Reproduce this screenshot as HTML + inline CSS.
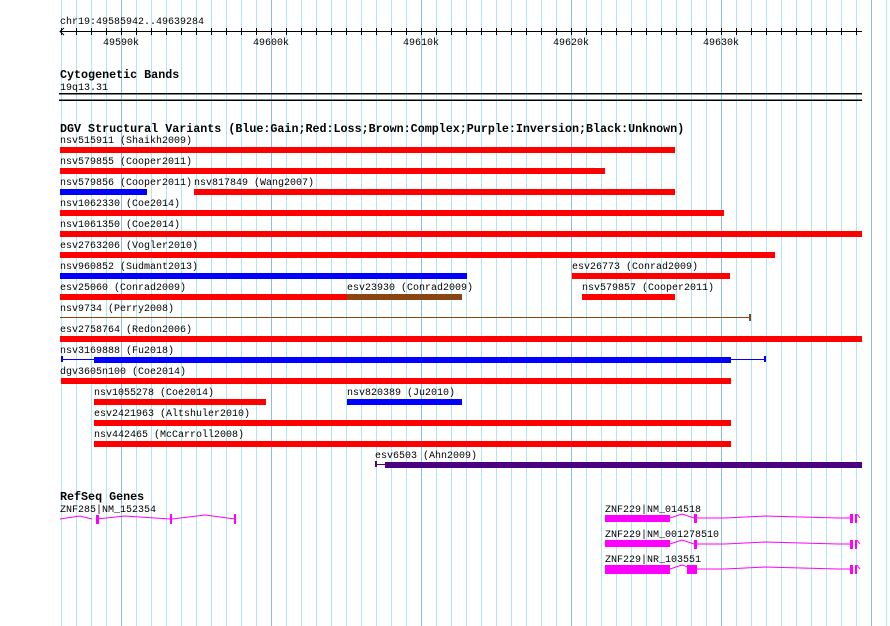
<!DOCTYPE html><html><head><style>body{margin:0;background:#fff}svg{display:block}text{font-family:"Liberation Mono",monospace;font-size:10px;fill:#000}.b{font-weight:bold;font-size:11.7px}</style></head><body>
<svg width="890" height="626" xmlns="http://www.w3.org/2000/svg">
<defs>
<pattern id="gp" x="61" y="0" width="15" height="626" patternUnits="userSpaceOnUse"><rect x="0" y="0" width="1" height="626" fill="#aee8ee"/></pattern>
<pattern id="tp" x="61" y="0" width="15" height="626" patternUnits="userSpaceOnUse"><rect x="0" y="0" width="1" height="626" fill="#000"/></pattern>
</defs>
<rect x="61" y="0" width="827" height="626" fill="url(#gp)"/>
<g fill="#8cc0e0"><rect x="121" y="0" width="1" height="626"/><rect x="271" y="0" width="1" height="626"/><rect x="421" y="0" width="1" height="626"/><rect x="571" y="0" width="1" height="626"/><rect x="721" y="0" width="1" height="626"/><rect x="871" y="0" width="1" height="626"/></g>
<rect x="61" y="28" width="800" height="7" fill="url(#tp)"/>
<text x="60" y="24">chr19:49585942..49639284</text>
<line x1="60" y1="31.5" x2="862" y2="31.5" stroke="#000"/>
<path d="M64 28 L60 31.5 L64 35" fill="none" stroke="#000"/>
<text x="103" y="45">49590k</text><text x="253" y="45">49600k</text><text x="403" y="45">49610k</text><text x="553" y="45">49620k</text><text x="703" y="45">49630k</text>
<text class="b" x="60" y="78">Cytogenetic Bands</text>
<text x="60" y="90">19q13.31</text>
<rect x="59" y="93" width="803" height="1.5" fill="#000"/><rect x="59" y="99.5" width="803" height="1.5" fill="#000"/>
<text class="b" x="60" y="132">DGV Structural Variants (Blue:Gain;Red:Loss;Brown:Complex;Purple:Inversion;Black:Unknown)</text>
<g fill="red">
<text x="60" y="143">nsv515911 (Shaikh2009)</text><rect x="60" y="147" width="615" height="6"/>
<text x="60" y="164">nsv579855 (Cooper2011)</text><rect x="60" y="168" width="545" height="6"/>
<text x="60" y="185">nsv579856 (Cooper2011)</text><text x="194" y="185">nsv817849 (Wang2007)</text><rect x="60" y="189" width="87" height="6" fill="#00f"/><rect x="194" y="189" width="481" height="6"/>
<text x="60" y="206">nsv1062330 (Coe2014)</text><rect x="60" y="210" width="664" height="6"/>
<text x="60" y="227">nsv1061350 (Coe2014)</text><rect x="60" y="231" width="802" height="6"/>
<text x="60" y="248">esv2763206 (Vogler2010)</text><rect x="60" y="252" width="715" height="6"/>
<text x="60" y="269">nsv960852 (Sudmant2013)</text><text x="572" y="269">esv26773 (Conrad2009)</text><rect x="60" y="273" width="407" height="6" fill="#00f"/><rect x="572" y="273" width="158" height="6"/>
<text x="60" y="290">esv25060 (Conrad2009)</text><text x="347" y="290">esv23930 (Conrad2009)</text><text x="582" y="290">nsv579857 (Cooper2011)</text><rect x="60" y="294" width="287" height="6"/><rect x="347" y="294" width="115" height="6" fill="#8b4513"/><rect x="582" y="294" width="93" height="6"/>
<text x="60" y="311">nsv9734 (Perry2008)</text><rect x="60" y="317" width="690" height="1" fill="#8b4513"/><rect x="749" y="314" width="2" height="7" fill="#8b4513"/>
<text x="60" y="332">esv2758764 (Redon2006)</text><rect x="60" y="336" width="802" height="6"/>
<text x="60" y="353">nsv3169888 (Fu2018)</text><rect x="61" y="359" width="704" height="1" fill="#00f"/><rect x="94" y="357" width="637" height="6" fill="#00f"/><rect x="61" y="356" width="2" height="6" fill="#00f"/><rect x="764" y="356" width="2" height="6" fill="#00f"/>
<text x="60" y="374">dgv3605n100 (Coe2014)</text><rect x="61" y="378" width="670" height="6"/>
<text x="94" y="395">nsv1055278 (Coe2014)</text><text x="347" y="395">nsv820389 (Ju2010)</text><rect x="94" y="399" width="172" height="6"/><rect x="347" y="399" width="115" height="6" fill="#00f"/>
<text x="94" y="416">esv2421963 (Altshuler2010)</text><rect x="94" y="420" width="637" height="6"/>
<text x="94" y="437">nsv442465 (McCarroll2008)</text><rect x="94" y="441" width="637" height="6"/>
<text x="375" y="458">esv6503 (Ahn2009)</text><rect x="375" y="464" width="10" height="1" fill="#4b0082"/><rect x="375" y="461" width="2" height="6" fill="#4b0082"/><rect x="385" y="462" width="477" height="6" fill="#4b0082"/>
</g>
<text class="b" x="60" y="500">RefSeq Genes</text>
<text x="60" y="512">ZNF285|NM_152354</text>
<g stroke="#f0f" fill="none" stroke-width="1">
<path d="M60 519 L80 516 L92 519 M97 519 L125 516 L170 519 M172 519 L205 515 L235 519"/>
<path d="M605 518 L670 518 L682 514 L694 518 L725 518 L765 516 L838 518 L852 518"/>
<path d="M605 544 L670 544 L682 540 L694 544 L725 544 L765 542 L838 544 L852 544"/>
<path d="M605 569 L670 569 L682 565 L694 569 L725 569 L765 567 L838 569 L852 569"/>
<path d="M857 514 L860 518 M857 540 L860 544 M857 565 L860 569"/>
</g>
<g fill="#f0f">
<rect x="96" y="515" width="3" height="9"/><rect x="170" y="514" width="2" height="10"/><rect x="234" y="514" width="2" height="10"/>
<text x="605" y="512">ZNF229|NM_014518</text><rect x="605" y="515" width="65" height="7"/><rect x="694" y="514" width="3" height="9"/><rect x="850" y="514" width="3" height="9"/><rect x="855" y="514" width="2" height="9"/>
<text x="605" y="537">ZNF229|NM_001278510</text><rect x="605" y="540" width="65" height="7"/><rect x="694" y="540" width="3" height="9"/><rect x="850" y="540" width="3" height="9"/><rect x="855" y="540" width="2" height="9"/>
<text x="605" y="562">ZNF229|NR_103551</text><rect x="605" y="565" width="65" height="9"/><rect x="687" y="565" width="10" height="9"/><rect x="850" y="565" width="3" height="9"/><rect x="855" y="565" width="2" height="9"/>
</g>
</svg>
<style>g[fill="red"] text{fill:#000}g[fill="#f0f"] text{fill:#000}</style>
</body></html>
